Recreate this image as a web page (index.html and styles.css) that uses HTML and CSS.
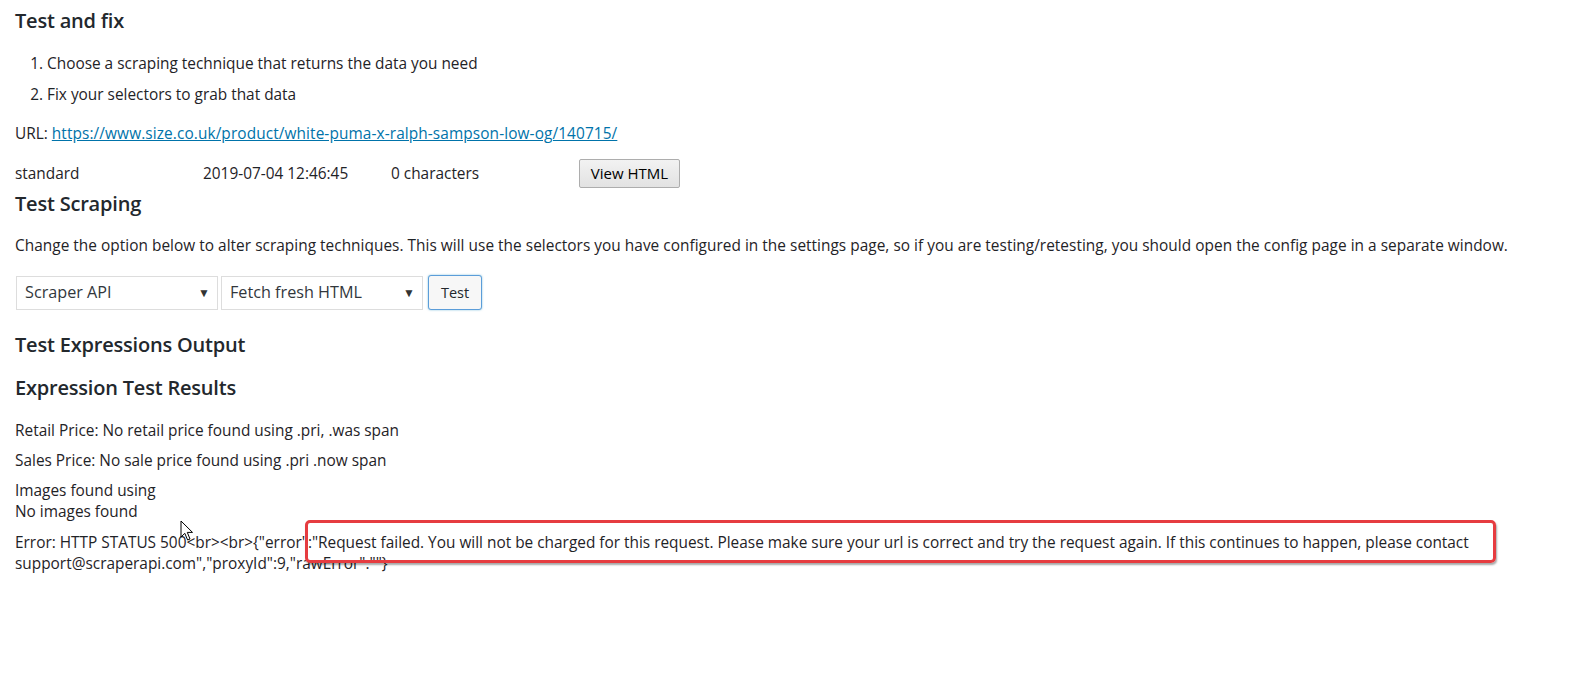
FILE: index.html
```html
<!DOCTYPE html>
<html>
<head>
<meta charset="utf-8">
<link rel="stylesheet" href="styles.css">
</head>
<body>
<div class="page">
  <h2 class="title first">Test and fix</h2>
  <ol class="steps">
    <li>Choose a scraping technique that returns the data you need</li>
    <li>Fix your selectors to grab that data</li>
  </ol>
  <p class="url">URL: <a href="#">https://www.size.co.uk/product/white-puma-x-ralph-sampson-low-og/140715/</a></p>
  <div class="meta-row">
    <span class="cell">standard</span>
    <span class="cell">2019-07-04 12:46:45</span>
    <span class="cell">0 characters</span>
    <span class="cell"><button class="btn-view">View HTML</button></span>
  </div>
  <h2 class="title scraping">Test Scraping</h2>
  <p class="intro">Change the option below to alter scraping techniques. This will use the selectors you have configured in the settings page, so if you are testing/retesting, you should open the config page in a separate window.</p>
  <div class="controls">
    <div class="select"><span>Scraper API</span><span class="arrow">▼</span></div>
    <div class="select"><span>Fetch fresh HTML</span><span class="arrow">▼</span></div>
    <button class="btn-test">Test</button>
  </div>
  <h2 class="title output">Test Expressions Output</h2>
  <h2 class="title results">Expression Test Results</h2>
  <p class="line">Retail Price: No retail price found using .pri, .was span</p>
  <p class="line">Sales Price: No sale price found using .pri .now span</p>
  <p class="line images">Images found using<br>No images found</p>
  <div class="error-wrap">
    <p class="line error">Error: HTTP STATUS 500&lt;br&gt;&lt;br&gt;{"error":"Request failed. You will not be charged for this request. Please make sure your url is correct and try the request again. If this continues to happen, please contact support@scraperapi.com","proxyId":9,"rawError":""}</p>
    <div class="highlight"></div>
    <svg class="cursor" width="14" height="22" viewBox="0 0 14 22"><path d="M1 1 L1 17 L4.8 13.3 L7.6 20 L10 19 L7.3 12.4 L12.5 12.4 Z" fill="#fff" stroke="#000" stroke-width="1"/></svg>
  </div>
</div>
</body>
</html>
```
FILE: styles.css
```css
html, body {
  margin: 0;
  padding: 0;
  background: #fff;
}
body {
  font-family: "Open Sans", "Noto Sans", sans-serif;
  font-size: 15.4px;
  line-height: 21px;
  color: #1f2327;
}
.page {
  padding: 8px 15px 0 15px;
  width: 1548px;
}
.title {
  font-size: 20px;
  font-weight: 600;
  line-height: 26px;
  margin: 0;
  color: #23282d;
  letter-spacing: -0.2px;
}
.steps {
  margin: 19px 0 0 0;
  padding: 0 0 0 32px;
}
.steps li {
  margin-bottom: 10px;
}
.url {
  margin: 18px 0 0 0;
}
.url a {
  color: #0073aa;
  letter-spacing: 0.1px;
}
.meta-row {
  display: grid;
  grid-template-columns: 188px 188px 188px 120px;
  margin-top: 19px;
  height: 28px;
  align-items: start;
}
.cell {
  display: block;
}
.btn-view {
  margin-top: -9px;
  width: 101px;
  height: 29px;
  font-family: inherit;
  font-size: 15px;
  color: #000;
  background: linear-gradient(#f2f2f2, #e2e2e2);
  border: 1px solid #adadad;
  border-radius: 2px;
  padding: 0;
}
.intro {
  margin: 18px 0 0 0;
  letter-spacing: 0.03px;
}
.controls {
  display: flex;
  align-items: center;
  gap: 3px;
  margin-top: 19px;
  margin-left: 1px;
}
.select {
  display: flex;
  justify-content: space-between;
  align-items: center;
  box-sizing: border-box;
  width: 202px;
  height: 34px;
  border: 1px solid #ddd;
  background: #fff;
  padding: 0 7px 0 8px;
  font-size: 16.2px;
  color: #32373c;
}
.arrow {
  font-size: 12px;
  color: #333;
}
.btn-test {
  margin-left: 2px;
  box-sizing: border-box;
  width: 54px;
  height: 35px;
  border: 1px solid #5b9dd9;
  border-radius: 3px;
  background: #f7f7f7;
  box-shadow: 0 0 2px rgba(30, 140, 190, 0.6);
  font-family: inherit;
  font-size: 14.5px;
  color: #23282d;
  padding: 0;
}
.output {
  margin-top: 22px;
}
.results {
  margin-top: 17px;
}
.line {
  margin: 0;
}
.results + .line {
  margin-top: 19px;
}
.line + .line {
  margin-top: 9px;
}
.images {
  line-height: 21px;
}
.error-wrap {
  position: relative;
  margin-top: 10px;
}
.error {
  margin: 0;
}
.highlight {
  position: absolute;
  left: 290px;
  top: -12px;
  width: 1185px;
  height: 37px;
  border: 3px solid #e63c40;
  border-radius: 5px;
  box-shadow: 1px 2px 2px rgba(0, 0, 0, 0.35);
}
.cursor {
  position: absolute;
  left: 165px;
  top: -12px;
}
```
